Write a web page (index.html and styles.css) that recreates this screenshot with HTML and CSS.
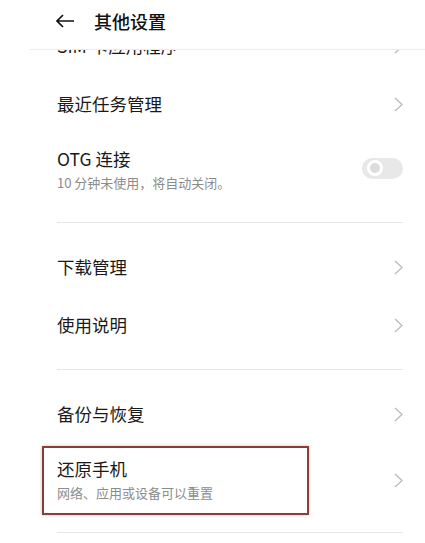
FILE: index.html
```html
<!DOCTYPE html>
<html lang="zh-CN">
<head>
    <meta charset="UTF-8">
    <meta name="viewport" content="width=device-width, initial-scale=1.0">
    <title>其他设置</title>
    <link rel="stylesheet" href="styles.css">
</head>
<body>
<div id="page">
    <div id="header">
        <svg class="back" width="20" height="14" viewBox="0 0 20 14">
            <path d="M19 7H2M8 1L2 7l6 6" fill="none" stroke="#111" stroke-width="1.7"/>
        </svg>
        <span class="title">其他设置</span>
    </div>

    <div id="viewport">
        <div id="list">
            <div class="section first">
                <div class="row">
                    <span class="label">SIM 卡应用程序</span>
                    <svg class="chev" width="9" height="15" viewBox="0 0 9 15"><path d="M1 1l7 6.5L1 14" fill="none" stroke="#b8b8b8" stroke-width="1.2"/></svg>
                </div>
                <div class="row">
                    <span class="label">最近任务管理</span>
                    <svg class="chev" width="9" height="15" viewBox="0 0 9 15"><path d="M1 1l7 6.5L1 14" fill="none" stroke="#b8b8b8" stroke-width="1.2"/></svg>
                </div>
                <div class="row tall">
                    <div class="texts">
                        <span class="label">OTG 连接</span>
                        <span class="sub">10 分钟未使用，将自动关闭。</span>
                    </div>
                    <div class="toggle"><div class="knob"></div></div>
                </div>
            </div>
            <div class="divider"></div>

            <div class="section">
                <div class="row">
                    <span class="label">下载管理</span>
                    <svg class="chev" width="9" height="15" viewBox="0 0 9 15"><path d="M1 1l7 6.5L1 14" fill="none" stroke="#b8b8b8" stroke-width="1.2"/></svg>
                </div>
                <div class="row">
                    <span class="label">使用说明</span>
                    <svg class="chev" width="9" height="15" viewBox="0 0 9 15"><path d="M1 1l7 6.5L1 14" fill="none" stroke="#b8b8b8" stroke-width="1.2"/></svg>
                </div>
            </div>
            <div class="divider"></div>

            <div class="section">
                <div class="row">
                    <span class="label">备份与恢复</span>
                    <svg class="chev" width="9" height="15" viewBox="0 0 9 15"><path d="M1 1l7 6.5L1 14" fill="none" stroke="#b8b8b8" stroke-width="1.2"/></svg>
                </div>
                <div class="row tall marked">
                    <div class="texts">
                        <span class="label">还原手机</span>
                        <span class="sub">网络、应用或设备可以重置</span>
                    </div>
                    <svg class="chev" width="9" height="15" viewBox="0 0 9 15"><path d="M1 1l7 6.5L1 14" fill="none" stroke="#b8b8b8" stroke-width="1.2"/></svg>
                    <div class="highlight"></div>
                </div>
            </div>
            <div class="divider"></div>
        </div>
    </div>
</div>
</body>
</html>
```

FILE: styles.css
```css
html, body {
    margin: 0;
    padding: 0;
    background: #fff;
}
body {
    font-family: "Noto Sans CJK SC", "Noto Sans", sans-serif;
    color: #1a1a1a;
}
#page {
    width: 425px;
    height: 543px;
    display: flex;
    flex-direction: column;
    overflow: hidden;
}
#header {
    height: 41px;
    display: flex;
    align-items: center;
    margin-left: 30px;
    padding: 0 0 8px 25px;
    border-bottom: 1px solid #ececec;
    position: relative;
    z-index: 2;
    background: #fff;
}
.back {
    margin-right: 19px;
}
.title {
    font-size: 18px;
    font-weight: 500;
    color: #111;
}
#viewport {
    flex: 1;
    overflow: hidden;
}
#list {
    margin-top: -33px;
}
.section {
    padding: 15px 0;
}
.section.first {
    padding-top: 0;
}
.row {
    height: 58px;
    display: flex;
    align-items: center;
    justify-content: space-between;
    padding: 0 22px 0 57px;
    position: relative;
}
.row.tall {
    height: 74px;
}
.label {
    font-size: 17.5px;
    line-height: 24px;
}
.texts {
    display: flex;
    flex-direction: column;
}
.sub {
    font-size: 13px;
    line-height: 20px;
    color: #8c8c8c;
    margin-top: 2px;
}
.divider {
    height: 1px;
    background: #e6e6e6;
    margin: 0 22px 0 57px;
}
.toggle {
    width: 41px;
    height: 21px;
    border-radius: 11px;
    background: #e8e8e8;
    display: flex;
    align-items: center;
    padding-left: 5px;
    box-sizing: border-box;
    margin-top: -4px;
}
.knob {
    width: 10px;
    height: 10px;
    border-radius: 50%;
    border: 3px solid #fff;
    background: #dcdcdc;
}
.highlight {
    position: absolute;
    left: 42px;
    top: 3px;
    width: 263px;
    height: 65px;
    border: 2px solid #8e3b3b;
    box-shadow: 0 0 3px rgba(142, 59, 59, 0.35);
}
```
